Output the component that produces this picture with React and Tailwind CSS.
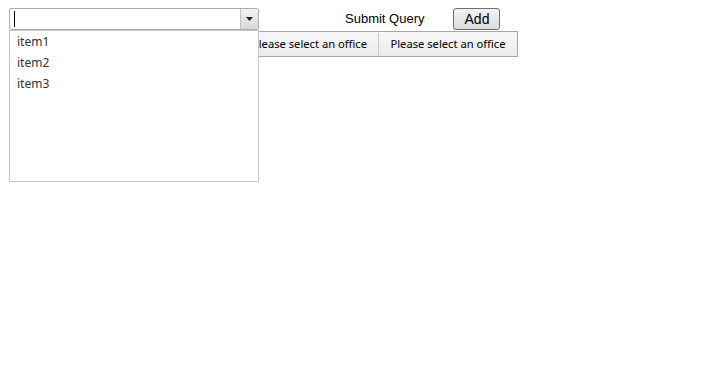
export default function App() {
  const items = ["item1", "item2", "item3"];
  return (
    <div className="w-[718px] h-[378px] bg-white pt-[8px] pl-[9px]" style={{ fontFamily: '"Liberation Sans", Arial, sans-serif' }}>
      <div className="flex items-start">
        <div className="relative w-[250px] h-[22px] z-10">
          <div className="flex h-full border border-[#abadb3] rounded-[2px] bg-white">
            <div className="flex-1 flex items-center pl-[4px]">
              <div className="w-px h-[16px] bg-black" />
            </div>
            <div className="w-[18px] h-full flex items-center justify-center border-l border-[#c4c4c4] bg-gradient-to-b from-[#f2f2f2] to-[#d8d8d8]">
              <svg width="7" height="4" viewBox="0 0 7 4"><path d="M0 0H7L3.5 4Z" fill="#222" /></svg>
            </div>
          </div>
          <div className="absolute left-0 top-[22px] w-[250px] h-[152px] border border-[#c6c3cb] bg-white" style={{ fontFamily: '"Noto Sans", "Open Sans", sans-serif' }}>
            {items.map((it) => (
              <div key={it} className="h-[21px] flex items-center pl-[7px] text-[12px] text-[#333]">{it}</div>
            ))}
          </div>
        </div>
        <div className="ml-[86px] h-[22px] flex items-center text-[13px] text-black">Submit Query</div>
        <button className="ml-[29px] w-[47px] h-[22px] border border-[#707070] rounded-[3px] bg-gradient-to-b from-[#f3f3f3] to-[#dcdcdc] text-[14px] text-black flex items-center justify-center">Add</button>
      </div>
      <div className="ml-[231px] mt-[1px] flex w-[278px] h-[26px] border border-[#a8a8a8] bg-gradient-to-b from-[#f7f7f7] to-[#ebebeb] text-[11.2px] text-black pt-[1px]" style={{ fontFamily: '"Noto Sans", "Open Sans", sans-serif' }}>
        <div className="w-[138px] flex items-center justify-center border-r border-[#c8c8c8]">Please select an office</div>
        <div className="flex-1 flex items-center justify-center">Please select an office</div>
      </div>
    </div>
  );
}
